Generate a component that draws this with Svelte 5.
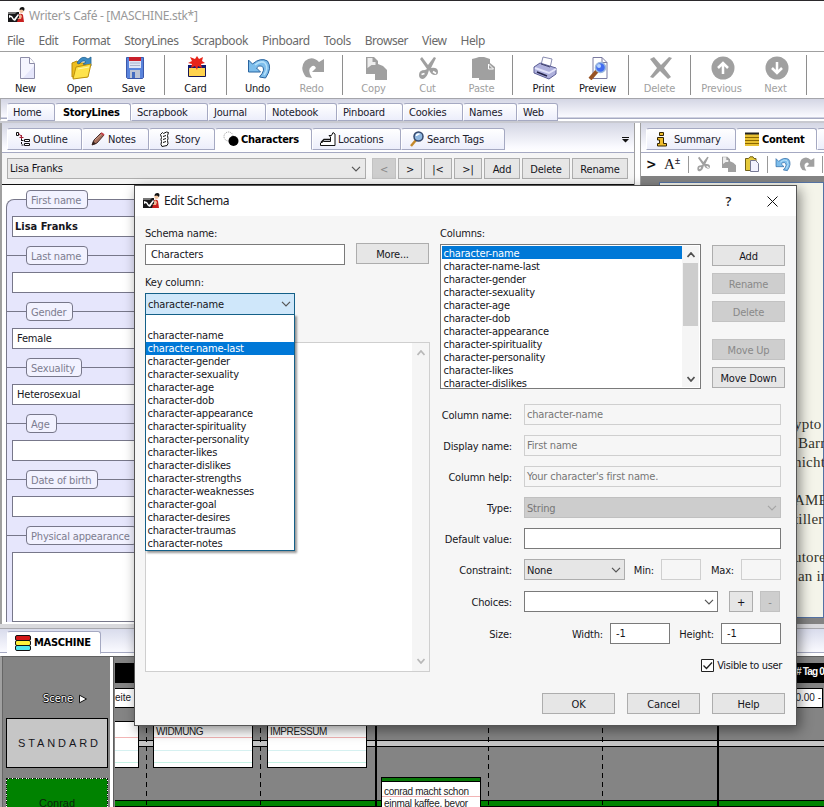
<script>
  const menus = ['File', 'Edit', 'Format', 'StoryLines', 'Scrapbook', 'Pinboard', 'Tools', 'Browser', 'View', 'Help'];
  const tools = [
    ['New', 'new'], ['Open', 'open'], ['Save', 'save'], null,
    ['Card', 'card'], null,
    ['Undo', 'undo'], ['Redo', 'redo', 1], null,
    ['Copy', 'copy', 1], ['Cut', 'cut', 1], ['Paste', 'paste', 1], null,
    ['Print', 'print'], ['Preview', 'preview'], null,
    ['Delete', 'delete', 1], null,
    ['Previous', 'prev', 1], ['Next', 'next', 1], null,
    ['S', 'none', 1]
  ];
  const mainTabs = [['Home', 48], ['StoryLines', 76], ['Scrapbook', 77], ['Journal', 58], ['Notebook', 71], ['Pinboard', 66], ['Cookies', 60], ['Names', 54], ['Web', 41]];
  const subTabs = [['Outline', 75, 'outline'], ['Notes', 67, 'notes'], ['Story', 66, 'story'], ['Characters', 97, 'chars'], ['Locations', 89, 'locations'], ['Search Tags', 104, 'search']];
  const fields = [['First name', 'Lisa Franks'], ['Last name', ''], ['Gender', 'Female'], ['Sexuality', 'Heterosexual'], ['Age', ''], ['Date of birth', ''], ['Physical appearance', '']];
  const columns = ['name', 'name-last', 'gender', 'sexuality', 'age', 'dob', 'appearance', 'spirituality', 'personality', 'likes', 'dislikes', 'strengths', 'weaknesses', 'goal', 'desires', 'traumas', 'notes'].map((n) => 'character-' + n);
</script>

{#snippet chev(c = '#555', w = 1.2)}
  <svg class="chev" width="10" height="6" viewBox="0 0 10 6"><path d="M1 .8 5 4.8 9 .8" fill="none" stroke={c} stroke-width={w} /></svg>
{/snippet}

{#snippet logo()}
  <svg width="17" height="17" viewBox="0 0 17 17">
    <path d="M0 5h11v10H0z" fill="#171719" /><path d="M0 5h9L7 7H0z" fill="#777" />
    <path d="M1 8l3 1 2 3 4-5 1 1-4 6-2-1-2-3-2 1z" fill="#fff" />
    <path d="M11 7q3-1 4 1l1 7H9l1-3 2-1z" fill="#c8201f" />
    <circle cx="13.500" cy="3.800" r="2.200" fill="#f0c4a0" /><path d="M11.500 3q0-3 3-3t1.500 4l-2-1.500z" fill="#111" /><path d="M12 7l2 2-1 3-4 0 2-1z" fill="#efb894" />
  </svg>
{/snippet}

{#snippet icon(n, s = 24)}
  <svg width={s} height={s} viewBox="0 0 24 24" fill="none">
    {#if n === 'new'}
      <path d="M5.500 1.500h9l5 6v15h-14z" fill="#e5e6fb" stroke="#8d8da8" /><path d="M6 2h8l0 6 5 0v2L8 22H6z" fill="#f5f5ff" /><path d="M14.500 1.500v6h5" fill="#fff" stroke="#8d8da8" />
    {:else if n === 'open'}
      <path d="M3 7l5-2 2 2h8v14H3z" fill="#edbd20" stroke="#b98a08" /><path d="M8 7q5-9 11-4l3-2 0 9-8-2 3-2q-3-3-7 2z" fill="#3c8bc4" stroke="#23628f" stroke-width=".8" />
      <path d="M7 11l15-3-3 13-15 2z" fill="#ffe34c" stroke="#bd910b" /><path d="M9 13l11-2" stroke="#fff6ad" />
    {:else if n === 'save'}
      <path d="M3.500 1.500h17v20l-1 1h-15l-1-1z" fill="#5a84dc" stroke="#3c58aa" /><path d="M6 2h12v10H6z" fill="#dfe5f5" /><path d="M6 1h12v4H6z" fill="#c9202b" /><path d="M7 7h10M7 9.500h10" stroke="#a9b1cc" /><path d="M7 14h10v8H7z" fill="#bdc4d5" /><path d="M9 16h3v6H9z" fill="#456cc0" />
    {:else if n === 'card'}
      <path d="M3.500 9.500h17v11h-17z" fill="#ffd34e" stroke="#151555" /><path d="M3 9h18v3H3z" fill="#101a70" />
      <path d="M12 0l2 3 4-2-1 4 3 2-4 1 1 4-4-2-1 4-2-4-4 2 1-4-4-1 4-2-2-4 5 2z" fill="#e72419" />
    {:else if n === 'undo'}
      <path d="M1.500 4l4 4q8-7 15-3 5 7-2 17l-6-1q7-8 2-11-3-1-5 2l4 4H1.500z" fill="#7dbdeb" stroke="#2864a0" /><path d="M8 9q6-5 10-2 4 5-1 12" stroke="#b6e0fa" stroke-width="1.500" />
    {:else if n === 'redo'}
      <path d="M23 3v13H11l4-4q-2-4-5-1-4 3 1 11l-6-1q-7-9-1-16 7-6 14 1z" fill="#a0a0a0" />
    {:else if n === 'copy'}
      <path d="M3 1h8l4 4v3l5 2 4 4v10H12v-6H3z" fill="#a0a0a0" /><path d="M4.500 2h5v4h3v3h-4L4.500 12z" fill="#eee" />
    {:else if n === 'cut'}
      <path d="M5 1l6 8 6-8 2 1-5 10q7-1 7 4 0 3-3 3-4 0-6-5-2 8-6 9-4 0-4-4 0-5 6-5l2-1L3 3z" fill="#a0a0a0" /><path d="M4.500 18.500l3-1M16 15.500l3 2" stroke="#fff" stroke-width="1.800" />
    {:else if n === 'paste'}
      <path d="M1 3l4-1 3-1h5l3 1 3 1v4l5 4v13H8v-2H1z" fill="#a0a0a0" /><path d="M17.500 8v5h5z" stroke="#fff" fill="none" />
    {:else if n === 'print'}
      <path d="M8 9L10 1l9 2-2 9z" fill="#fff" stroke="#888bb0" /><path d="M1 11l6-4 16 5v6l-7 5-15-6z" fill="#aeb0dc" stroke="#5c5e95" /><path d="M2 12l14 5 7-4" stroke="#e3e4fa" stroke-width="2" /><path d="M4 16l10 4" stroke="#222247" stroke-width="1.500" /><path d="M8 8l9 3" stroke="#44456e" />
    {:else if n === 'preview'}
      <path d="M6 1.500h9l5 5v16H6z" fill="#fff" stroke="#7b7ba1" /><path d="M15 1.500v5h5" stroke="#7b7ba1" /><path d="M10 15l-7 8" stroke="#985324" stroke-width="4" /><circle cx="13.500" cy="11.500" r="5" fill="#426cf0" stroke="#9cb8dc" stroke-width="1.500" /><circle cx="12" cy="10" r="2" fill="#b6d4ff" />
    {:else if n === 'delete'}
      <path d="M1 3l4-2 7 8 8-8 3 1-8 10 7 9-3 2-8-8-7 7-3-1 7-9z" fill="#a0a0a0" />
    {:else if n === 'prev' || n === 'next'}
      <circle cx="12" cy="12" r="11.500" fill="#a0a0a0" />
      <path d={n === 'prev' ? 'M12 18V7M7 12l5-5 5 5' : 'M12 6v11M7 12l5 5 5-5'} stroke="#fff" stroke-width="2.500" />
    {/if}
  </svg>
{/snippet}

{#snippet small(n)}
  <svg width="16" height="16" viewBox="0 0 16 16" fill="none">
    {#if n === 'outline'}
      <path d="M1.500 1.500h2v3h-2z" stroke="#111" /><path d="M6.500 8v6h3M6.500 9.500h3" stroke="#111" stroke-dasharray="2 1" /><path d="M4 2.500l2 3M4.500 6.500h4M6.500 4v4" stroke="#a32035" /><path d="M9.500 8.500h5v2h-5zM9.500 12.500h5v2h-5z" stroke="#111" fill="#fff" />
    {:else if n === 'notes'}
      <path d="M2 14l2-5 7-7 3 2-7 8z" fill="#a66f5c" stroke="#482d2b" /><path d="M5 9l7-6" stroke="#d0a591" /><path d="M2 14l1-4 3 3z" fill="#33211e" /><path d="M11 2l3 2" stroke="#c64249" stroke-width="2" />
    {:else if n === 'story'}
      <path d="M3.500 3.500l2-2 1 1 3-1.500 2 .5-1 3 .5 3-.5 2 .5 3-1 2-5 1-1-2 .5-3-.5-2 .5-2z" fill="#fff" stroke="#111" /><path d="M6 5.500l3-1M6 8.500l3-1M6 11.500l3-1" stroke="#111" />
    {:else if n === 'chars'}
      <circle cx="5.500" cy="5.500" r="4.500" fill="#fff" stroke="#999" stroke-dasharray="1 1" /><circle cx="10.500" cy="10" r="5" fill="#000" />
    {:else if n === 'locations'}
      <path d="M.5 14.500V12l3-1.500h7V6L9 4.500h2.500l1.500-3 2 1.500v11.500z" fill="#fff" stroke="#111" /><path d="M1 11.500l3-3h6" stroke="#111" stroke-width="1.500" />
    {:else if n === 'search'}
      <path d="M7 9l-5 6" stroke="#c58a2c" stroke-width="2.500" /><circle cx="9.500" cy="5.500" r="4.500" fill="#8fb7e0" stroke="#34476b" stroke-width="1.500" /><path d="M7.500 5q0-2 3-2" stroke="#fff" stroke-width="1.500" />
    {:else if n === 'info'}
      <path d="M5.500 1.500h4v3h-4zM3.500 6.500h6v6h3v2.500h-9v-2.500h2V9h-2z" fill="#efbd2d" stroke="#332400" />
    {:else if n === 'content'}
      <path d="M1 2h14v13H1z" fill="#e8c132" /><path d="M1 2.500h14" stroke="#222" stroke-width="2" /><path d="M1 6.500h14M1 9.500h14M1 12.500h14" stroke="#8b6800" />
    {/if}
  </svg>
{/snippet}

<div class="app">
  <header>
    <div class="title">{@render logo()}<span>Writer's Café - [MASCHINE.stk*]</span></div>
    <nav class="menu">{#each menus as m}<span>{m}</span>{/each}</nav>
  </header>

  <div class="toolbar">
    {#each tools as t}
      {#if t}<div class="tool" class:off={t[2]} class:edge={t[0] === 'S'}>{@render icon(t[1])}<span>{t[0]}</span></div>
      {:else}<i class="sep"></i>{/if}
    {/each}
  </div>

  <div class="tabs main">
    {#each mainTabs as [t, w]}<div class="tab" class:active={t === 'StoryLines'} style:width="{w}px">{t}</div>{/each}
  </div>

  <div class="work">
    <section class="left">
      <div class="tabs sub">
        {#each subTabs as [t, w, i]}<div class="tab" class:active={t === 'Characters'} style:width="{w}px">{@render small(i)}<span>{t}</span></div>{/each}
        <svg class="more" width="7" height="6" viewBox="0 0 7 6"><path d="M0 0h7v1H0zM0 2h7L3.500 5.500z" fill="#111" /></svg>
      </div>
      <div class="picker">
        <div class="person"><span>Lisa Franks</span>{@render chev()}</div>
        <div class="btn dis" style:width="24px">&lt;</div><div class="btn" style:width="24px">&gt;</div>
        <div class="btn" style:width="28px">|&lt;</div><div class="btn" style:width="28px">&gt;|</div>
        <div class="btn" style:width="36px">Add</div><div class="btn" style:width="48px">Delete</div><div class="btn" style:width="56px">Rename</div>
      </div>
      <div class="form">
        <div class="sheet">
          {#each fields as [l, v], k}
            <div class="field" class:first={k === 0}><span class="pill">{l}</span><div class="val" class:tall={k === 6} class:name={k === 0}>{v}</div></div>
          {/each}
        </div>
      </div>
    </section>

    <section class="right">
      <div class="tabs sub">
        <div class="tab" style:width="90px">{@render small('info')}<span class="sum">Summary</span></div>
        <div class="tab active" style:width="81px">{@render small('content')}<span>Content</span></div>
        <div class="tab" style:width="60px"><svg width="6" height="10" viewBox="0 0 6 10"><path d="M0 1h6M3 1v8" stroke="#222" /></svg></div>
      </div>
      <div class="edit">
        <b class="gt">&gt;</b><span class="fontsize">A<sup>±</sup></span><i></i>
        {@render icon('cut', 16)}{@render icon('copy', 16)}
        <svg width="16" height="16" viewBox="0 0 16 16"><path d="M1.500 2.500h3L6 .8h3l1 1.700h2v12H1.500z" fill="#e5ca3c" stroke="#706018" /><path d="M6.500 4.500h5l3 3v8h-8z" fill="#f2f2ff" stroke="#777995" /></svg>
        <i></i>{@render icon('undo', 16)}{@render icon('redo', 16)}<i></i>
      </div>
      <div class="desk">
        <div class="page">
          <p>ypto</p><p>&nbsp;Barr</p><p>nicht</p><p></p><p>AME</p><p>tiller</p><p></p><p>utore</p><p>&nbsp;an in</p>
        </div>
      </div>
    </section>
  </div>

  <div class="tabs bottom">
    <div class="tab active"><svg width="16" height="16" viewBox="0 0 16 16"><rect x=".5" y=".5" width="15" height="5" rx="1.500" fill="#d31818" stroke="#111" /><rect x=".5" y="5.500" width="15" height="5" rx="1.500" fill="#fff23c" stroke="#111" /><rect x=".5" y="10.500" width="15" height="5" rx="1.500" fill="#52e8ef" stroke="#111" /></svg><span>MASCHINE</span></div>
  </div>

  <div class="story">
    <aside>
      <div class="scene">Scene <svg width="10" height="10" viewBox="0 0 10 10"><path d="M1.500 1.200v7.600L8.500 5z" fill="#fff" stroke="#111" /></svg></div>
      <div class="strand">STANDARD</div>
      <div class="strand conrad"><span>Conrad</span></div>
    </aside>
    <div class="split"></div>
    <div class="canvas">
      <div class="band"></div><div class="rail"></div><div class="rail green"></div>
      {#each [31, 145, 373, 487] as x}<i class="dash" style:left="{x}px"></i>{/each}
      {#each [260, 602] as x}<i class="bar" style:left="{x}px"></i>{/each}
      <span class="tag"># Tag 0</span><span class="time a">eite</span><span class="time b">00.00 -</span>
      <div class="note" style:left="-76px"></div>
      <div class="note" style:left="38px">WIDMUNG</div>
      <div class="note" style:left="152px">IMPRESSUM</div>
      <div class="note con"><span>conrad macht schon</span><span>einmal kaffee, bevor</span></div>
    </div>
  </div>

  <div class="dialog">
    <div class="dtitle">{@render logo()}<span>Edit Schema</span><b>?</b><svg width="11" height="11" viewBox="0 0 11 11"><path d="M.5.5l10 10M10.500.5l-10 10" stroke="#111" /></svg></div>
    <div class="dbody">
      <div class="dleft">
        <div class="lab">Schema name:</div>
        <div class="row"><div class="inp schema">Characters</div><div class="btn" style:width="73px">More...</div></div>
        <div class="lab key">Key column:</div>
        <div class="combo open"><span>character-name</span>{@render chev()}
          <div class="drop"><div></div>{#each columns as c, k}<div class:sel={k === 1}>{c}</div>{/each}</div>
        </div>
        <div class="help"><div class="sb dim">
          <svg width="8" height="6" viewBox="0 0 8 6"><path d="M0.500 5l3.500-4 3.500 4" /></svg><svg width="8" height="6" viewBox="0 0 8 6"><path d="M0.500 1l3.500 4 3.500-4" /></svg>
        </div></div>
      </div>
      <div class="dright">
        <div class="lab">Columns:</div>
        <div class="cols">
          <div class="list"><div class="items">{#each columns.slice(0, 11) as c, k}<div class:sel={k === 0}>{c}</div>{/each}</div>
            <div class="sb"><svg width="8" height="6" viewBox="0 0 8 6"><path d="M0.500 5l3.500-4 3.500 4" /></svg><i></i><svg width="8" height="6" viewBox="0 0 8 6"><path d="M0.500 1l3.500 4 3.500-4" /></svg></div>
          </div>
          <div class="stack"><div class="btn">Add</div><div class="btn dis">Rename</div><div class="btn dis">Delete</div><div class="btn dis gap">Move Up</div><div class="btn">Move Down</div></div>
        </div>
        <div class="frow" style:margin-top="16px"><label>Column name:</label><div class="inp ro">character-name</div></div>
        <div class="frow"><label>Display name:</label><div class="inp ro">First name</div></div>
        <div class="frow"><label>Column help:</label><div class="inp ro">Your character's first name.</div></div>
        <div class="frow"><label>Type:</label><div class="combo gray"><span>String</span>{@render chev('#a5a5a5')}</div></div>
        <div class="frow"><label>Default value:</label><div class="inp"></div></div>
        <div class="frow"><label>Constraint:</label><div class="combo none"><span>None</span>{@render chev()}</div><span class="mid" style:width="36px">Min:</span><div class="inp ro" style:width="40px"></div><span class="mid" style:width="40px">Max:</span><div class="inp ro" style:width="40px"></div></div>
        <div class="frow" style:margin-top="11px"><label>Choices:</label><div class="combo white"><span></span>{@render chev()}</div><div class="btn" style:width="24px" style:margin-left="11px">+</div><div class="btn dis" style:width="20px" style:margin-left="7px">-</div></div>
        <div class="frow" style:margin-top="11px"><label>Size:</label><span class="mid" style:width="86px">Width:</span><div class="inp n">-1</div><span class="mid" style:width="51px">Height:</span><div class="inp n">-1</div></div>
        <div class="check"><svg width="13" height="13" viewBox="0 0 13 13"><path d="M.5.5h12v12H.5z" fill="#fff" stroke="#222" /><path d="M2.500 6.500l3 3 5.500-6" fill="none" stroke="#222" stroke-width="1.300" /></svg><span>Visible to user</span></div>
        <div class="actions"><div class="btn">OK</div><div class="btn">Cancel</div><div class="btn">Help</div></div>
      </div>
    </div>
  </div>
</div>

<style>
  .app { position: relative; width: 824px; height: 807px; overflow: hidden; background: #fff; color: #16161c; display: flex; flex-direction: column; font: 11px/13px "DejaVu Sans Condensed", "DejaVu Sans", sans-serif; font-stretch: condensed; letter-spacing: -0.18px; white-space: nowrap; }
  .app *, .app { box-sizing: border-box; }
  svg { flex: none; display: block; }
  header { height: 52px; border-top: 1px solid #2b292c; border-bottom: 1px solid #a0a0a0; font-family: "Noto Sans", sans-serif; font-size: 12px; letter-spacing: -0.3px; flex: none; }
  .title { display: flex; align-items: center; height: 28px; padding: 1px 0 0 8px; gap: 4px; color: #999; }
  .menu { display: flex; gap: 14px; padding: 5px 0 0 7px; color: #6a6a6a; line-height: 14px; letter-spacing: -0.44px; }
  .toolbar { height: 46px; flex: none; display: flex; padding: 4px 0 0; overflow: hidden; }
  .tool { width: 54px; flex: none; display: flex; flex-direction: column; align-items: center; gap: 2px; }
  .tool span { margin-left: -3px; }
  .tool.edge { align-items: flex-start; padding-left: 15px; }
  .off { color: #a0a0a0; }
  .sep { width: 8px; flex: none; height: 40px; margin-top: -1px; background: linear-gradient(#8e8e8e, #8e8e8e) 2px 0 / 1px 100% no-repeat; }
  .tabs { display: flex; flex: none; background: linear-gradient(#d4d6e4, #fafaff); }
  .tab { flex: none; display: flex; align-items: center; border: 1px solid #a5a9c2; border-left-color: #fff; border-radius: 3px 3px 0 0; background: linear-gradient(#fff, #eceefb); color: #20202c; }
  .tab.active { background: #fff; border-bottom-color: #fff; font-weight: bold; color: #000; letter-spacing: -0.28px; }
  .main { height: 23px; border-top: 1px solid #a5a5ab; padding: 4px 0 0 6px; border-bottom: 2px solid #fff; border-left: 1px solid #aaa; background: linear-gradient(#d4d6e4, #fafaff 18px, #a5a9c2 19px, #a5a9c2 20px); }
  .main .tab { padding-left: 5px; height: 18px; padding-top: 1px; }
  .main .active { padding-left: 7px; }
  .work { display: flex; height: 503px; flex: none; border-top: 2px solid #c8c9d0; }
  .left { width: 635px; flex: none; border-left: 2px solid #a0a0a0; border-right: 1px solid #a0a0a0; }
  .sub { height: 30px; padding: 5px 0 0 5px; border-bottom: 1px solid #a5a9c2; background: linear-gradient(#d4d6e4, #fafaff 24px, #fff); }
  .sub .tab { height: 22px; padding-left: 7px; gap: 2px; }
  .sum { margin-left: 2px; }
  .more { margin: 9px 5px 0 auto; }
  .picker { height: 31px; display: flex; gap: 2px; padding: 5px 0 0 5px; background: #f5f5f5; }
  .person { width: 359px; flex: none; height: 21px; margin-right: 4px; border: 1px solid #adadad; background: #e9e9e9; display: flex; justify-content: space-between; align-items: center; padding: 0 4px 0 2px; }
  .btn { height: 21px; flex: none; border: 1px solid #adadad; background: #e6e6e6; display: flex; align-items: center; justify-content: center; color: #15151c; padding-top: 1px; }
  .btn.dis { background: #cecece; border-color: #c2c2c2; color: #898989; }
  .form { height: 438px; border-top: 1px solid #111; padding: 14px 0 0 4px; }
  .sheet { background: #e6e6fc; border: 1px solid #77778a; border-radius: 8px 0 0 0; height: 423px; border-bottom: 0; }
  .field { height: 56px; position: relative; border-top: 1px solid #77778a; padding: 16px 0 0 5px; }
  .field.first { height: 55px; border-top: 0; }
  .pill { position: absolute; left: 19px; top: -10px; height: 19px; border: 1px solid #77778a; border-radius: 4px; background: #f2f2ff; color: #7d7d90; padding: 3px 6px 0 4px; line-height: 13px; letter-spacing: -0.18px; }
  .val { border: 1px solid #77778a; background: #fff; height: 21px; padding: 3px 4px; width: 600px; }
  .val.name { font-weight: bold; padding-left: 2px; letter-spacing: 0; }
  .val.tall { height: 70px; }
  .right { flex: 1; margin-left: 5px; border-left: 1px solid #a0a0a0; min-width: 0; overflow: hidden; background: #fff; }
  .edit { height: 23px; display: flex; align-items: center; gap: 8px; padding: 0 0 2px 5px; border-top: 1px solid #fff; }
  .edit i { width: 1px; height: 17px; background: #999; flex: none; margin: 0 -1px; }
  .gt { font-size: 14px; color: #111; width: 11px; }
  .fontsize { font: 15px/16px "Liberation Serif", serif; width: 17px; margin-left: -1px; }
  sup { font: bold 10px/8px "Liberation Serif", serif; vertical-align: 5px; }
  .desk { height: 448px; background: #838383; padding: 6px 0 0 18px; }
  .page { background: #f4f4ea; border: 1px solid #5472a4; height: 436px; padding: 232px 0 0 134px; font: 15px/19px "Liberation Serif", serif; color: #34342d; letter-spacing: 0.2px; }
  .page p { margin: 0; height: 19px; }
  .bottom { height: 32px; background: linear-gradient(#d9d9dd 4px, #a8a8ae 4px, #a8a8ae 5px, #d9dcec 5px, #fafaff 28px, #a5a9c2 28px, #a5a9c2 29px, #fff 29px); padding: 7px 0 0 7px; }
  .bottom .tab { width: 94px; height: 23px; padding-left: 7px; gap: 3px; }
  .story { height: 151px; display: flex; background: #848484; border-top: 1px solid #606060; border-left: 2px solid #a0a0a0; }
  aside { width: 108px; padding-left: 4px; flex: none; border-left: 1px solid #666; }
  .scene { color: #fff; text-shadow: 1px 0 #111, -1px 0 #111, 0 1px #111, 0 -1px #111; display: flex; gap: 5px; align-items: center; height: 13px; margin: 35px 0 13px 36px; letter-spacing: 0; }
  .strand { margin-left: -1px; width: 102px; height: 50px; border: 1px solid #000; background: #c6c6c6; font: 11px/49px "Liberation Sans", sans-serif; letter-spacing: 2.9px; padding-left: 11px; }
  .conrad { margin-top: 10px; background: #008200; border: 1px dashed #fff; outline: 1px dotted #111; outline-offset: -1px; letter-spacing: 0; padding-left: 32px; color: #0b1f0b; }
  .split { width: 5px; flex: none; background: linear-gradient(90deg, #fff 3px, #555 3px, #666 4px, #848484 4px); }
  .canvas { flex: 1; position: relative; overflow: hidden; font: 10px/12px "Liberation Sans", sans-serif; letter-spacing: -0.4px; }
  .canvas > * { position: absolute; }
  .band { top: 6px; height: 20px; left: 0; right: 0; background: #000; }
  .rail { left: 0; right: 0; top: 83px; height: 7px; background: #c6c6c6; border: solid #000; border-width: 1px 0; }
  .rail.green { top: 143px; background: #008200; }
  .dash { top: 26px; bottom: 0; width: 1px; background: repeating-linear-gradient(#000 0 5px, transparent 5px 9px); }
  .bar { top: 0; bottom: 0; width: 2px; background: #000; }
  .tag { color: #fff; left: 681px; top: 9px; font-weight: bold; letter-spacing: -0.8px; }
  .time { background: #fff; border: 1px solid #000; height: 20px; top: 31px; padding: 3px 0; letter-spacing: 0; }
  .time.a { left: -1px; width: 80px; }
  .time.b { left: 620px; width: 88px; padding-right: 1px; text-align: right; }
  .note { width: 100px; top: 64px; height: 47px; border: 1px solid #000; padding: 4px 2px; color: #222; background: linear-gradient(transparent 15px, #f2b5b5 15px, #f2b5b5 16px, transparent 16px, transparent 28px, #d6f1f1 28px, #d6f1f1 29px, transparent 29px, transparent 40px, #c5f2e5 40px, #c5f2e5 41px, transparent 41px), #fff; }
  .con { left: 266px; top: 120px; height: 80px; padding: 8px 2px; background: linear-gradient(#087808 3px, #000 3px, #000 4px, #fff 4px, #fff 18px, #f2b5b5 18px, #f2b5b5 19px, #fff 19px); }
  .con span { display: block; height: 12px; letter-spacing: -0.3px; }

  .dialog { position: absolute; left: 134px; top: 185px; width: 663px; height: 541px; background: #f6f6f6; border: 1px solid #555; box-shadow: 3px 4px 12px rgba(0, 0, 0, .45); display: flex; flex-direction: column; }
  .dtitle { height: 30px; flex: none; background: #fff; display: flex; align-items: center; padding: 0 18px 0 8px; gap: 4px; font: 12px/16px "Noto Sans", sans-serif; letter-spacing: -0.35px; }
  .dtitle b { margin-left: auto; margin-right: 32px; font-weight: 500; font-size: 13px; }
  .dbody { display: flex; padding: 10px 0 0 10px; gap: 10px; }
  .dleft { width: 285px; flex: none; }
  .lab { height: 17px; line-height: 14px; padding-top: 1px; }
  .row { display: flex; justify-content: space-between; padding-right: 1px; }
  .inp { height: 21px; border: 1px solid #7a7a7a; background: #fff; padding: 3px 2px; flex: none; }
  .inp.ro { background: #f6f6f6; border-color: #cfcfcf; color: #777; }
  .inp.schema { width: 200px; padding-left: 5px; margin-top: 1px; }
  .lab.key { margin-top: 11px; padding-top: 0; }
  .combo { height: 21px; border: 1px solid #adadad; background: #e6e6e6; display: flex; align-items: center; justify-content: space-between; padding: 0 3px 0 2px; flex: none; }
  .frow .combo > span { padding-top: 1px; }
  .combo.open { width: 150px; height: 22px; background: #cfe7fa; border-color: #146088; position: relative; }
  .drop { position: absolute; left: -1px; top: 20px; width: 150px; height: 237px; background: #fff; border: 1px solid #146088; padding-top: 1px; z-index: 2; box-shadow: 2px 2px 2px rgba(0, 0, 0, .4); }
  .drop div { height: 13px; padding-left: 1.5px; line-height: 14px; }
  .drop .sel, .items .sel { background: #0078d7; color: #fff; }
  .help { margin-top: 27px; height: 330px; border: 1px solid #cfcfcf; background: #fff; display: flex; justify-content: flex-end; }
  .sb { width: 17px; display: flex; flex-direction: column; align-items: center; padding: 7px 0; background: #f5f5f5; }
  .sb path { fill: none; stroke: #505050; stroke-width: 1.7; }
  .sb.dim path { stroke: #b8b8b8; }
  .sb svg:last-child { margin-top: auto; }
  .sb i { width: 15px; height: 63px; background: #cdcdcd; margin-top: 5px; flex: none; }
  .dright { width: 345px; }
  .cols { display: flex; justify-content: space-between; height: 145px; }
  .list { width: 261px; margin-top: 1px; height: 145px; border: 1px solid #7a7a7a; background: #fff; display: flex; overflow: hidden; padding: 1px; }
  .items { flex: 1; }
  .items div { height: 13px; padding-left: 1.5px; line-height: 15px; }
  .list .sb { padding: 6px 0 5px; }
  .stack { display: flex; flex-direction: column; gap: 7px; margin-top: 2px; width: 73px; }
  .gap { margin-top: 10px; }
  .frow { display: flex; height: 21px; margin-top: 10px; }
  .frow label { width: 72px; margin-right: 12px; text-align: right; padding-top: 5px; flex: none; }
  .frow .inp, .frow .combo { width: 257px; }
  .frow .none { width: 101px; }
  .frow .white { width: 194px; background: #fff; border-color: #7a7a7a; }
  .frow .gray { background: #cdcdcd; border-color: #c0c0c0; color: #777; }
  .frow .inp.n { width: 60px; padding-left: 5px; }
  .mid { text-align: right; padding: 5px 7px 0 0; flex: none; }
  .check { display: flex; gap: 3px; justify-content: flex-end; padding-right: 3px; margin-top: 15px; align-items: center; letter-spacing: -0.35px; }
  .actions { display: flex; gap: 12px; justify-content: flex-end; margin-top: 21px; }
  .actions .btn { width: 73px; }
</style>
